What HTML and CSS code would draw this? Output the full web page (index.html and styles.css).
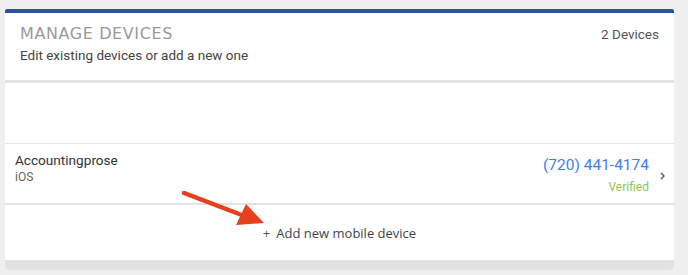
FILE: index.html
```html
<!DOCTYPE html>
<html lang="en">
<head>
    <meta charset="UTF-8">
    <title>Manage Devices</title>
    <link rel="stylesheet" href="styles.css">
</head>
<body>
    <div class="card">
        <div class="card-header">
            <div>
                <h2 class="title">MANAGE DEVICES</h2>
                <p class="subtitle">Edit existing devices or add a new one</p>
            </div>
            <div class="count">2 Devices</div>
        </div>

        <div class="empty-row"></div>

        <div class="device-row">
            <div class="device-info">
                <div class="device-name">Accountingprose</div>
                <div class="device-os">iOS</div>
            </div>
            <div class="device-status">
                <div class="phone">(720) 441-4174</div>
                <div class="verified">Verified</div>
            </div>
            <svg class="chevron" width="6" height="8" viewBox="0 0 6 8">
                <polyline points="1,1 4,4 1,7" fill="none" stroke="#555" stroke-width="1.4"/>
            </svg>
        </div>

        <div class="add-row">
            <span class="add-link"><span class="plus">+</span><span>Add new mobile device</span></span>
            <svg class="arrow" width="100" height="50" viewBox="0 0 100 50">
                <line x1="3" y1="2" x2="66" y2="26" stroke="#e8401f" stroke-width="4.5" stroke-linecap="round"/>
                <polygon points="83,32 55,34 65,13" fill="#e8401f"/>
            </svg>
        </div>

        <div class="card-footer"></div>
    </div>
</body>
</html>
```

FILE: styles.css
```css
body {
    margin: 0;
    padding: 9px 14px 5px 5px;
    background-color: #efefef;
    font-family: Roboto, "Liberation Sans", sans-serif;
}

.card {
    background: white;
    border-top: 4px solid #2b53a0;
    border-radius: 2px 2px 4px 4px;
    overflow: hidden;
}

.card-header {
    display: flex;
    justify-content: space-between;
    align-items: flex-start;
    height: 67px;
    padding: 0 15px 0 15px;
    border-bottom: 3px solid #e3e3e3;
}

.title {
    margin: 11px 0 0;
    font-family: "DejaVu Sans", sans-serif;
    font-weight: normal;
    font-size: 16px;
    letter-spacing: 0.6px;
    color: #9a9a9a;
}

.subtitle {
    margin: 4px 0 0;
    font-size: 13.5px;
    color: #444;
}

.count {
    margin-top: 13px;
    font-size: 13.5px;
    color: #555;
}

.empty-row {
    height: 60px;
    border-bottom: 1px solid #e6e6e6;
}

.device-row {
    display: flex;
    align-items: flex-start;
    height: 59px;
    padding: 0 8px 0 10px;
    border-bottom: 2px solid #e3e3e3;
}

.device-info {
    flex: 1;
    padding-top: 8px;
}

.device-name {
    font-size: 13.6px;
    color: #333;
}

.device-os {
    margin-top: 2px;
    font-size: 12px;
    color: #666;
}

.device-status {
    padding-top: 12px;
    text-align: right;
}

.phone {
    font-size: 15.5px;
    color: #3f80f3;
}

.verified {
    margin-top: 6px;
    font-size: 12px;
    color: #8cc65a;
}

.chevron {
    margin: 28px 0 0 11px;
}

.add-row {
    position: relative;
    height: 55px;
    display: flex;
    align-items: center;
    justify-content: center;
    padding-left: 0;
    font-family: "Open Sans", sans-serif;
    font-size: 13px;
    color: #444;
}

.add-link {
    display: flex;
    align-items: center;
    gap: 6px;
}

.plus {
    color: #555;
}

.arrow {
    position: absolute;
    left: 176px;
    top: -14px;
}

.card-footer {
    height: 10px;
    background: #e2e2e2;
}
```
